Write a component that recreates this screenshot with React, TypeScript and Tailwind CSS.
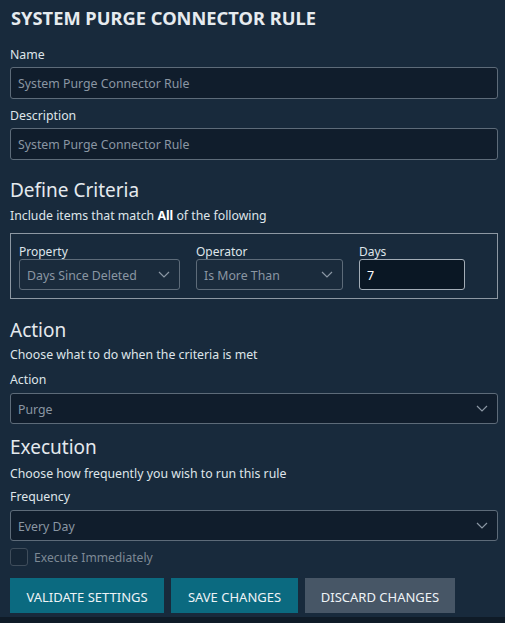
import type { ReactNode } from 'react';

function Chevron() {
  return (
    <svg width="12" height="7" viewBox="0 0 12 7" fill="none" className="shrink-0">
      <path d="M1 1l5 5 5-5" stroke="#8b97a4" strokeWidth="1.2" />
    </svg>
  );
}

function Label({ children, className = '' }: { children: ReactNode; className?: string }) {
  return <div className={`text-[12.3px] leading-[20px] text-[#dfe5ea] ${className}`}>{children}</div>;
}

function TextBox({ value }: { value: string }) {
  return (
    <div className="h-8 rounded-[3px] border border-[#5d6b79] bg-[#101d2c] px-[7px] flex items-center text-[12.3px] text-[#8a96a3]">
      <span className="pt-[3px]">{value}</span>
    </div>
  );
}

function SelectBox({ value, className = '' }: { value: string; className?: string }) {
  return (
    <div className={`h-[31px] rounded-[3px] border border-[#5d6b79] pl-[7px] pr-[9px] flex items-center justify-between text-[12.3px] text-[#8a96a3] ${className}`}>
      <span className="pt-[3px]">{value}</span>
      <Chevron />
    </div>
  );
}

function Heading({ children, className = '' }: { children: ReactNode; className?: string }) {
  return <h2 className={`text-[19px] leading-6 text-[#e4e9ee] ${className}`}>{children}</h2>;
}

export default function App() {
  return (
    <div className="w-[505px] h-[623px] bg-[#0f1b27]" style={{ fontFamily: '"Noto Sans", "Open Sans", sans-serif' }}>
      <div className="h-[617px] bg-[#182a3c] pl-[10px] pr-[7px] pt-[6px]">
        <h1 className="text-[18.3px] leading-6 font-bold text-[#e6ebef] pl-[1px]">SYSTEM PURGE CONNECTOR RULE</h1>

        <Label className="mt-[15px]">Name</Label>
        <div className="mt-[2px]">
          <TextBox value="System Purge Connector Rule" />
        </div>
        <Label className="mt-[7px]">Description</Label>
        <div className="mt-[2px]">
          <TextBox value="System Purge Connector Rule" />
        </div>

        <Heading className="mt-[18px]">Define Criteria</Heading>
        <Label className="mt-[4px]">
          Include items that match <b className="font-bold text-white">All</b> of the following
        </Label>

        <div className="mt-[7px] border border-[#8d98a3] h-[66px] px-[8px] pt-[11px] flex gap-4">
          <div className="w-[161px]">
            <div className="text-[12px] leading-[14px] text-[#dfe5ea]">Property</div>
            <SelectBox value="Days Since Deleted" className="bg-[#1a2b3c]" />
          </div>
          <div className="w-[147px]">
            <div className="text-[12px] leading-[14px] text-[#dfe5ea]">Operator</div>
            <SelectBox value="Is More Than" className="bg-[#1a2b3c]" />
          </div>
          <div className="w-[106px]">
            <div className="text-[12px] leading-[14px] text-[#dfe5ea]">Days</div>
            <div className="h-[31px] rounded-[3px] border border-[#a3adb7] bg-[#0a1724] px-[7px] flex items-center text-[12.5px] text-white">
              <span className="pt-[3px]">7</span>
            </div>
          </div>
        </div>

        <Heading className="mt-[19px]">Action</Heading>
        <Label className="mt-[3px]">Choose what to do when the criteria is met</Label>
        <Label className="mt-[5px]">Action</Label>
        <SelectBox value="Purge" className="mt-[3px] bg-[#101d2c]" />

        <Heading className="mt-[11px]">Execution</Heading>
        <Label className="mt-[5px]">Choose how frequently you wish to run this rule</Label>
        <Label className="mt-[3px]">Frequency</Label>
        <SelectBox value="Every Day" className="mt-[3px] bg-[#101d2c]" />

        <div className="mt-[7px] h-[18px] flex items-center gap-[6px]">
          <div className="w-[18px] h-[18px] rounded-[3px] border border-[#3f4d5b] bg-[#162636]" />
          <span className="pt-[3px] text-[12.1px] text-[#7d8995]">Execute Immediately</span>
        </div>

        <div className="mt-[12px] flex gap-[7px]">
          <button className="h-[35px] w-[154px] pt-[4px] bg-[#0b6a80] text-[13px] text-[#eef3f6]">VALIDATE SETTINGS</button>
          <button className="h-[35px] w-[127px] pt-[4px] bg-[#0b6a80] text-[13px] text-[#eef3f6]">SAVE CHANGES</button>
          <button className="h-[35px] w-[150px] pt-[4px] bg-[#475666] text-[13px] text-[#eef3f6]">DISCARD CHANGES</button>
        </div>
      </div>
    </div>
  );
}
